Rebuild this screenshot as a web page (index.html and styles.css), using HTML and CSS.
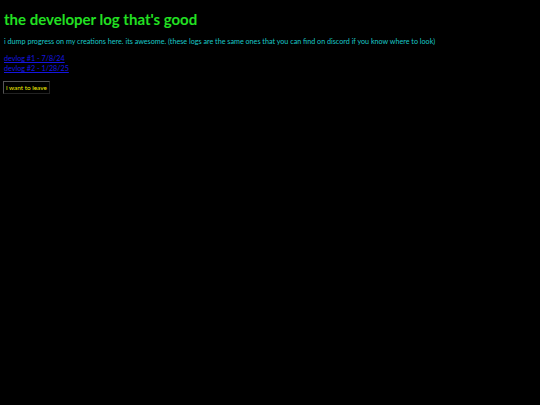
FILE: index.html
```html
<!DOCTYPE html>
<html>
<head>
<meta charset="utf-8">
<link rel="stylesheet" href="styles.css">
</head>
<body>
<h1 class="title">the developer log that's good</h1>
<p class="intro">i dump progress on my creations here. its awesome. (these logs are the same ones that you can find on discord if you know where to look)</p>
<div class="links">
<a class="link" href="#">devlog #1 - 7/8/24</a>
<a class="link" href="#">devlog #2 - 1/28/25</a>
</div>
<button class="leave">i want to leave</button>
</body>
</html>
```
FILE: styles.css
```css
html, body { background: #000; }
body {
  margin: 0;
  padding: 4px 4px;
  font-family: "Comic Sans MS", "Lato", sans-serif;
  display: flex;
  flex-direction: column;
  align-items: flex-start;
}
.title {
  margin: 6px 0 0 0;
  font-size: 15px;
  line-height: 18px;
  font-weight: bold;
  color: #22e022;
}
.intro {
  margin: 9px 0 0 0;
  font-size: 7.2px;
  line-height: 9px;
  color: #19c8c8;
}
.links {
  margin-top: 8px;
  display: flex;
  flex-direction: column;
  gap: 1px;
}
.link {
  font-size: 7.2px;
  line-height: 9px;
  color: #1515e0;
}
.leave {
  margin-top: 8px;
  margin-left: -1px;
  padding: 2px 2px;
  background: #000;
  color: #f0f000;
  font-family: inherit;
  font-size: 6.4px;
  line-height: 7px;
  border: 1px solid #555;
  border-right-color: #222;
  border-bottom-color: #222;
}
```
